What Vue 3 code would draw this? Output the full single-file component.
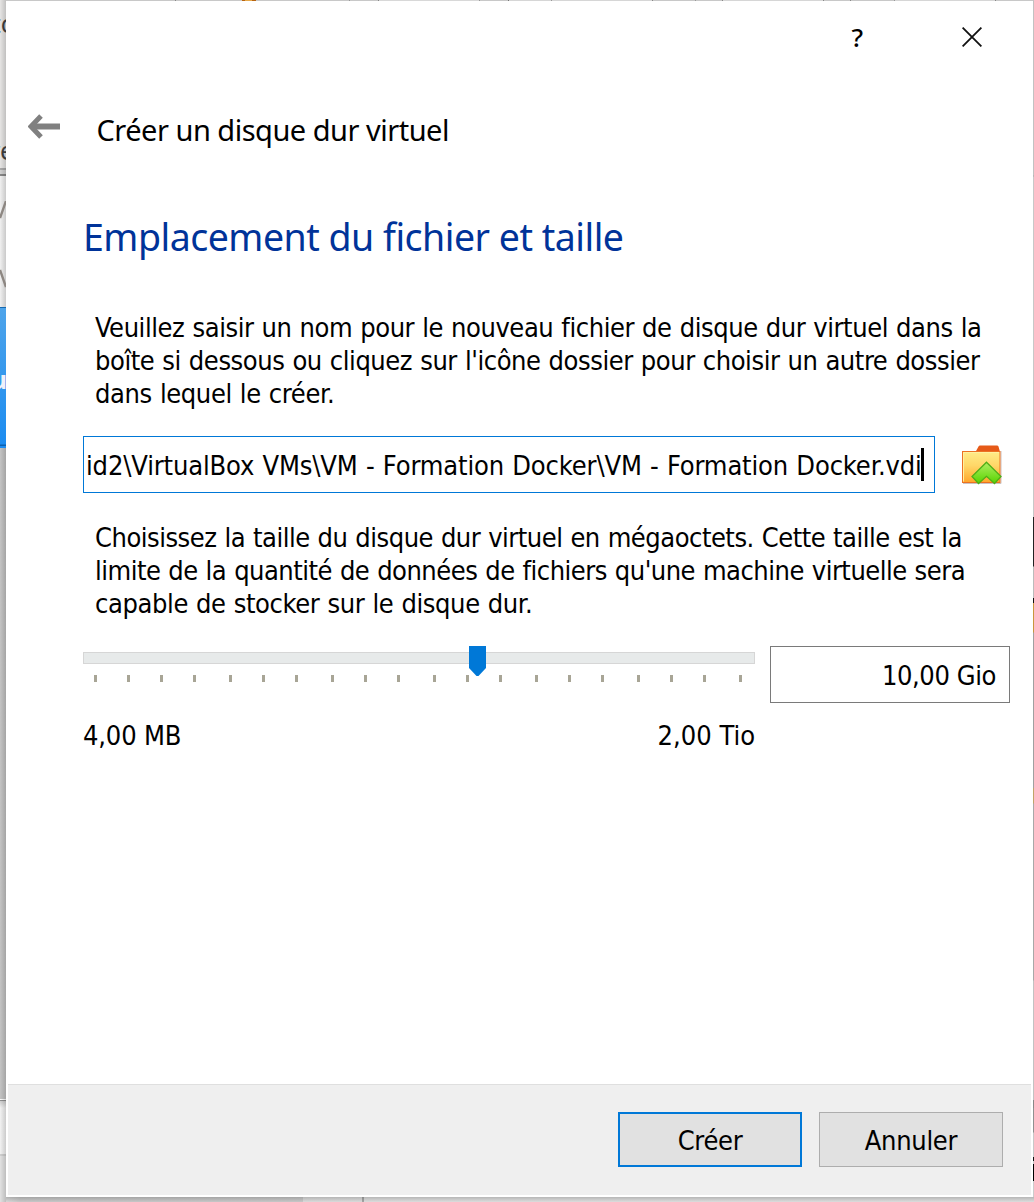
<script setup>
import { ref } from 'vue'

const intro = [
  { text: 'Veuillez saisir un nom pour le nouveau fichier de disque dur virtuel dans la', ls: -0.42 },
  { text: "boîte si dessous ou cliquez sur l'icône dossier pour choisir un autre dossier", ls: -0.43 },
  { text: 'dans lequel le créer.', ls: -0.38 },
]
const sizeInfo = [
  { text: 'Choisissez la taille du disque dur virtuel en mégaoctets. Cette taille est la', ls: -0.49 },
  { text: "limite de la quantité de données de fichiers qu'une machine virtuelle sera", ls: -0.5 },
  { text: 'capable de stocker sur le disque dur.', ls: -0.38 },
]
const path = ref('id2\\VirtualBox VMs\\VM - Formation Docker\\VM - Formation Docker.vdi')
const ticks = [0, 33, 66, 99, 135, 168, 201, 237, 270, 303, 339, 372, 405, 441, 474, 507, 543, 576, 609, 645]
const tickGap = (i) => (i ? ticks[i] - ticks[i - 1] - 3 : 0)
</script>

<template>
  <div class="desktop">
    <div class="behind top-strip"></div>
    <div class="behind left-strip">
      <span class="frag frag-a">to</span>
      <span class="frag frag-b">re</span>
      <svg class="frag-lines" width="6" height="90" viewBox="0 0 6 90" fill="none" stroke="#8d8782" stroke-width="2.4">
        <path d="M6 0 0 17M0 69 6 86" />
      </svg>
      <div class="selection"><span>u</span></div>
    </div>
    <div class="behind right-strip"></div>
    <div class="behind bottom-strip"></div>

    <main class="dialog">
      <header class="titlebar">
        <button class="help" aria-label="Aide">?</button>
        <button class="close" aria-label="Fermer">
          <svg width="20" height="20" viewBox="0 0 20 20" fill="none" stroke="#111" stroke-width="1.8">
            <path d="M.6.6 19.4 19.4M19.4.6.6 19.4" />
          </svg>
        </button>
      </header>

      <div class="wizard">
        <svg class="back" width="33" height="25" viewBox="0 0 33 25" fill="none" stroke="#808080">
          <path d="M32 12.5H4" stroke-width="6" />
          <path d="M13 2 3 12.5 13 23" stroke-width="5" />
        </svg>
        <span class="wizard-title">Créer un disque dur virtuel</span>
      </div>

      <h1>Emplacement du fichier et taille</h1>

      <div class="para">
        <div v-for="l in intro" :key="l.text" :style="{ letterSpacing: l.ls + 'px' }">{{ l.text }}</div>
      </div>

      <div class="file-row">
        <div class="field path"><span>{{ path }}</span><i class="caret"></i></div>
        <svg class="folder" width="41" height="41" viewBox="0 0 41 41">
          <defs>
            <linearGradient id="paper" x1="0" y1="0" x2="0" y2="1">
              <stop offset="0" stop-color="#ffec88" />
              <stop offset=".45" stop-color="#ffd768" />
              <stop offset="1" stop-color="#ffa62b" />
            </linearGradient>
            <linearGradient id="leaf" x1="0" y1="0" x2="0" y2="1">
              <stop offset="0" stop-color="#b0ee62" />
              <stop offset="1" stop-color="#57d400" />
            </linearGradient>
          </defs>
          <path d="M2 38.5H40V6" fill="none" stroke="#c9c2c2" stroke-width="1" />
          <path d="M14.500 7 17.500 1.500Q18 .5 19 .5H36Q37 .5 37.500 1.500L39 7Z" fill="#e65a18" />
          <rect x="1.500" y="6.500" width="37.500" height="31" fill="url(#paper)" stroke="#ec7222" />
          <path d="M2.500 36.500V7.500H38" fill="none" stroke="#fff0a0" />
          <path d="M25.500 17.200 40 31.500 33.500 38.500 25.500 31.300 17.500 38.500 11 31.500Z" fill="url(#leaf)" stroke="#4fae18" stroke-width="1.300" />
        </svg>
      </div>

      <div class="para second">
        <div v-for="l in sizeInfo" :key="l.text" :style="{ letterSpacing: l.ls + 'px' }">{{ l.text }}</div>
      </div>

      <div class="size-row">
        <div class="slider">
          <div class="groove">
            <svg class="thumb" width="17" height="30" viewBox="0 0 17 30"><path d="M0 0H17V22L9.500 30H7.500L0 22Z" fill="#0078d7" /></svg>
          </div>
          <div class="ticks">
            <i v-for="(t, i) in ticks" :key="t" :style="{ marginLeft: tickGap(i) + 'px' }"></i>
          </div>
          <div class="range"><span>4,00 MB</span><span>2,00 Tio</span></div>
        </div>
        <div class="field size">10,00 Gio</div>
      </div>

      <footer>
        <button class="btn primary">Créer</button>
        <button class="btn cancel">Annuler</button>
      </footer>
    </main>
  </div>
</template>

<style>
body { margin: 0; overflow: hidden; }
</style>

<style scoped>
.desktop {
  position: relative;
  box-sizing: border-box;
  width: 1034px;
  height: 1202px;
  padding: 1px 1px 5px 6px;
  overflow: hidden;
  background: #c8c8c8;
  font: 27px/33px "DejaVu Sans Condensed", "DejaVu Sans", sans-serif;
  color: #000;
}
.behind { position: absolute; overflow: hidden; }
.top-strip {
  inset: 0 0 auto 0;
  height: 1px;
  background:
    linear-gradient(90deg, transparent 242px, #b86410 242px 245px, #e6a848 245px 252px, #b86410 252px 256px, transparent 256px),
    linear-gradient(90deg, #c8c8c8 175px, #888 175px 176px, #c8c8c8 176px 349px, #999 349px 350px, #c8c8c8 350px 378px, #888 378px 379px, #d8d8d8 379px 479px, #999 479px 480px, #c8c8c8 480px 508px, #777 508px 509px, #d6d6d6 509px 551px, #999 551px 552px, #d6d6d6 552px 652px, #888 652px 653px, #c8c8c8 653px 695px, #999 695px 696px, #c8c8c8 696px 722px, #888 722px 723px, #d6d6d6 723px 823px, #888 823px 824px, #c8c8c8 824px 850px, #888 850px 851px, #c8c8c8 851px 894px, #999 894px 895px, #d6d6d6 895px 995px, #888 995px 996px, #c8c8c8 996px);
}
.left-strip {
  left: 0;
  top: 0;
  width: 6px;
  height: 1202px;
  background:
    linear-gradient(90deg, transparent, rgba(0, 0, 0, .16)),
    linear-gradient(#e6e5e4 168px, #aaa 168px 170px, #d2d2d2 170px 174px, #888 174px 176px, #f0f0f0 176px 307px, #c4c4c4 307px 1099px, #fff 1099px 1100px, #909090 1100px 1101px, #cfcfcf 1101px, #f2f2f2 1108px 1154px, #d0d0d0 1154px 1156px, #e2e2e2 1156px);
}
.frag {
  position: absolute;
  right: -10px;
  font: 25px/30px "Noto Sans", sans-serif;
  color: #3a3a3a;
}
.frag-a { top: 8px; }
.frag-b { top: 135px; right: -8px; }
.frag-lines { position: absolute; left: 0; top: 201px; }
.selection {
  position: absolute;
  left: 0;
  top: 307px;
  width: 6px;
  height: 141px;
  box-sizing: border-box;
  border-top: 1px solid #1769b0;
  background: linear-gradient(#4ea4ea, #1c8cf0 136px, #0b60b0 137px 138px, #1c8cf0 138px);
}
.selection span {
  position: absolute;
  right: -1px;
  top: 56px;
  font: bold 25px/30px "Noto Sans", sans-serif;
  color: #f0f0fa;
}
.right-strip {
  right: 0;
  top: 0;
  width: 1px;
  height: 1202px;
  background: linear-gradient(#c2c2c2 175px, #aaa 176px, #c8c8c8 177px 517px, #222 517px 566px, #bbb 567px 598px, #111 598px 603px, #c8963c 603px 632px, #a0a0a0 633px 788px, #c0a468 788px 803px, #a8a8a8 804px 980px, #c2c2c2 981px 1100px, #888 1100px 1108px, #909090 1108px 1132px, #c8c8c8 1133px 1157px, #111 1157px 1161px, #c8c8c8 1161px 1164px, #000 1164px 1181px, #ccc 1181px);
}
.bottom-strip {
  left: 6px;
  right: 0;
  bottom: 0;
  height: 5px;
  background:
    linear-gradient(rgba(0, 0, 0, .2), rgba(0, 0, 0, .03)),
    linear-gradient(90deg, #e0e0e0, #cecece 14px 297px, #e2e2e2 297px 356px, #aaa 356px 358px, #e4e4e4 358px);
}

.dialog {
  position: relative;
  display: flex;
  flex-direction: column;
  box-sizing: border-box;
  width: 1027px;
  height: 1196px;
  padding: 0 2px 2px;
  background: #fff;
}
button { margin: 0; padding: 0; border: 0; background: none; font: inherit; color: inherit; }
.titlebar {
  display: flex;
  justify-content: flex-end;
  align-items: center;
  gap: 99px;
  height: 72px;
  padding-right: 49px;
}
.help { font: 500 26px/32px "Noto Sans", sans-serif; }
.close { display: flex; }
.wizard {
  display: flex;
  align-items: center;
  height: 110px;
  padding-left: 20px;
}
.back { margin-top: -3px; }
.wizard-title {
  margin: 4px 0 0 35.5px;
  font: 29px/40px "Noto Sans", sans-serif;
  letter-spacing: -.5px;
}
h1 {
  height: 52px;
  margin: 27px 0 0 75px;
  font: 37.5px/54px "Noto Sans", sans-serif;
  letter-spacing: -.5px;
  color: #003399;
}
.para {
  height: 99px;
  margin: 49px 0 0 87px;
  word-spacing: .7px;
  white-space: nowrap;
}
.second { margin-top: 28px; }
.file-row {
  display: flex;
  align-items: center;
  height: 57px;
  margin: 26px 0 0 75px;
}
.field {
  display: flex;
  align-items: center;
  box-sizing: border-box;
  height: 57px;
  padding-top: 2px;
  border: 1px solid #7a7a7a;
  background: #fff;
  white-space: nowrap;
}
.path {
  width: 852px;
  padding-left: 2px;
  border-color: #0078d7;
  letter-spacing: -.14px;
  word-spacing: .7px;
}
.caret { flex: none; width: 3px; height: 33px; margin: -2px 0 0 -1px; background: #000; }
.folder { margin: 2px 0 0 26px; }
.size-row {
  display: flex;
  gap: 15px;
  height: 110px;
  margin: 26px 0 0 75px;
}
.slider { width: 672px; }
.groove {
  position: relative;
  box-sizing: border-box;
  height: 12px;
  margin-top: 6px;
  border: 1px solid #d6d6d6;
  background: #e7eaea;
}
.thumb { position: absolute; left: 385px; top: -7px; }
.ticks { display: flex; margin-top: 11px; padding-left: 11px; }
.ticks i { flex: none; width: 3px; height: 7px; background: #a8a596; }
.range { display: flex; justify-content: space-between; margin-top: 37px; white-space: nowrap; }
.range span:first-child { letter-spacing: -.15px; }
.size {
  justify-content: flex-end;
  width: 240px;
  padding-right: 13px;
  letter-spacing: -.4px;
}
footer {
  display: flex;
  justify-content: flex-end;
  gap: 17px;
  box-sizing: border-box;
  height: 111px;
  margin-top: auto;
  padding: 27px 28px 0 0;
  border-top: 1px solid #dfdfdf;
  background: #efefef;
}
.btn {
  box-sizing: border-box;
  width: 184px;
  height: 55px;
  padding-top: 2px;
  border: 1px solid #adadad;
  background: #e1e1e1;
  letter-spacing: -.3px;
}
.primary { border: 2px solid #0078d7; }
</style>
